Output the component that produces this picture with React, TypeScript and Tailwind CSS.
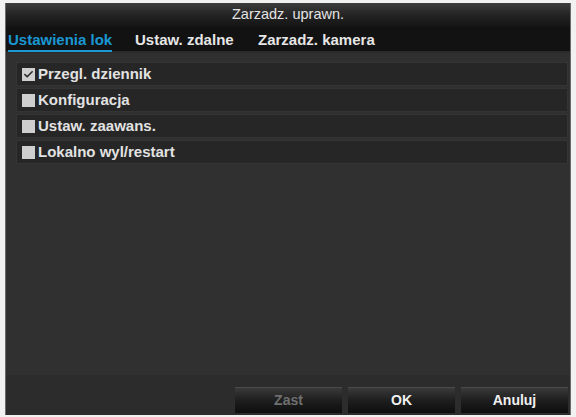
import { Check } from "lucide-react";

const rows = [
  { label: "Przegl. dziennik", checked: true },
  { label: "Konfiguracja", checked: false },
  { label: "Ustaw. zaawans.", checked: false },
  { label: "Lokalno wyl/restart", checked: false },
];

const tabs = [
  { label: "Ustawienia lok", width: "w-[127px]", active: true },
  { label: "Ustaw. zdalne", width: "w-[123px]", active: false },
  { label: "Zarzadz. kamera", width: "w-[130px]", active: false },
];

const buttons = [
  { label: "Zast", disabled: true },
  { label: "OK", disabled: false },
  { label: "Anuluj", disabled: false },
];

export default function App() {
  return (
    <div
      className="w-[576px] h-[417px] bg-[#f1f1f1] pl-[5px] pr-[5px] pt-[3px] pb-[2px]"
      style={{ fontFamily: '"Liberation Sans", Arial, sans-serif' }}
    >
      <div className="h-full flex flex-col bg-[#303030] border-l border-r border-[#6a6a6a]">
        <div className="h-[24px] flex items-center justify-center bg-gradient-to-b from-[#3d3d3d] via-[#242424] to-[#141414] text-[14.5px] text-[#e4e4e4]">
          Zarzadz. uprawn.
        </div>
        <div className="h-[26px] flex items-stretch bg-[#121212] pl-[2px] border-b-2 border-[#2a2a2a]">
          {tabs.map((t) => (
            <div key={t.label} className={`${t.width} flex items-center`}>
              <span
                className={
                  t.active
                    ? "text-[15px] font-bold text-[#1b97d3] border-b-2 border-[#1b97d3] leading-[20px] mt-[3px]"
                    : "text-[15px] font-bold text-[#e6e6e6] leading-[20px] mt-[1px]"
                }
              >
                {t.label}
              </span>
            </div>
          ))}
        </div>
        <div className="flex-1 flex flex-col pt-[9px] pl-[10px] pr-[2px]">
          <div className="flex flex-col gap-[2px]">
            {rows.map((r) => (
              <div
                key={r.label}
                className="h-[24px] flex items-center gap-[3px] pl-[5px] bg-[#262626] border border-[#343434]"
              >
                <span className="w-[13px] h-[13px] bg-[#cfcfcf] flex items-center justify-center">
                  {r.checked && <Check size={11} strokeWidth={3.5} color="#2a2a2a" />}
                </span>
                <span className="text-[15px] font-bold text-[#e2e2e2]">{r.label}</span>
              </div>
            ))}
          </div>
        </div>
        <div className="h-[40px] flex items-end justify-end gap-[6px] pr-[2px] pb-[2px] bg-[#2c2c2c]">
          {buttons.map((b) => (
            <button
              key={b.label}
              className={`w-[107px] h-[26px] flex items-center justify-center text-[14px] font-bold bg-gradient-to-b from-[#3a3a3a] via-[#1e1e1e] to-[#0e0e0e] border-t border-[#4a4a4a] ${
                b.disabled ? "text-[#6f6f6f]" : "text-[#f0f0f0]"
              }`}
            >
              {b.label}
            </button>
          ))}
        </div>
      </div>
    </div>
  );
}
